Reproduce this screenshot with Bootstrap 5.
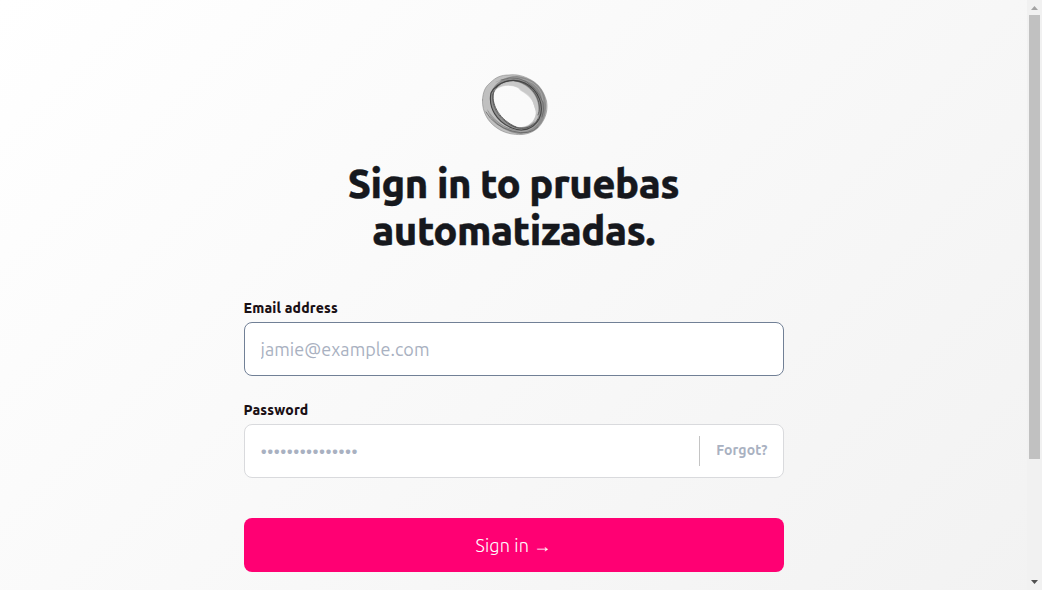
<!DOCTYPE html>
<html lang="en">
<head>
<meta charset="utf-8">
<meta name="viewport" content="width=device-width, initial-scale=1">
<title>Sign in</title>
<link href="https://cdn.jsdelivr.net/npm/bootstrap@5.3.0/dist/css/bootstrap.min.css" rel="stylesheet">
<style>
body{font-family:Ubuntu,"Noto Sans",sans-serif;color:#16161d;height:100vh;overflow:hidden}
.page{background:linear-gradient(135deg,#fff,#f1f1f1) 0 0/100% 743px no-repeat}
.signin{width:540px;padding-top:70px}
.logo{width:70px;height:70px}
.title{font-size:40px;line-height:47px;font-weight:800;letter-spacing:-.53px;-webkit-text-stroke:.35px #16181d;margin:20px 0 44px;color:#16181d}
.field-label{font-size:14px;line-height:20px;font-weight:800;margin-bottom:4px;color:#1a1015;letter-spacing:.17px}
.field{height:54px;border:1px solid #d9dadd;border-radius:8px;background:#fff}
.field.active{border-color:#718096}
.field input{font-size:18px;font-weight:450;letter-spacing:.05px;padding:0 16px;color:#16161d;border:0;background:transparent;box-shadow:none!important}
.field input::placeholder{color:#a9b1c1;opacity:1}
.field .dots::placeholder{font-size:18px;font-weight:400;letter-spacing:0}
.forgot{font-size:14px;font-weight:600;letter-spacing:.12px;color:#a9b1c1;border-left:1px solid #c4c4c4;height:30px;padding:0 15px 2px 16px;text-decoration:none}
.submit{height:54px;margin-top:40px;border-radius:8px;background:#ff0073;color:#fff;font-size:18px;font-weight:300;letter-spacing:.15px;border:0}
.scroll-track{width:15px;background:#f1f1f1}
.thumb{width:11px;height:444px;background:#c1c1c1}
</style>
</head>
<body class="d-flex">
<main class="page flex-grow-1 d-flex justify-content-center">
  <form class="signin">
    <svg class="logo d-block mx-auto" viewBox="0 0 70 70" fill="none">
      <path fill="#c0c0c0" fill-rule="evenodd" d="M3.500 30C4 22 6 17 11 13C17 7 22 5 30 5C38 4 45 6 52 10C60 14 65 22 67.500 31C69 39 67 46 64 51C60 59 52 64 43 64.500C34 65 25 63 18 58C9 52 3 42 3.500 30ZM14 29C15 36 17 42 23 48C29 54 36 58 43 57C52 56 57 49 57 41C55 37 55 32 51 27C47 22 43 22 40 18C35 15 26 14 21 17C16 19 14 23 14 29Z"/>
      <path fill="#777" fill-opacity=".7" fill-rule="evenodd" d="M11 25C14 14 25 6 38 6C56 8 67 20 67 34C68 53 57 63 42 64C27 63 12 53 8 39C15 50 24 57 34 59C47 63 60 55 60 41C60 26 49 13 34 11C22 10 15 17 11 25Z"/>
      <path fill="#666" fill-opacity=".55" d="M11 25C9 39 21 54 35 58C44 62 54 58 56 51C50 58 41 59 33 55C21 50 14 39 14 29C13 23 17 19 22 14C17 16 13 20 11 25Z"/>
      <path fill="#ccc" fill-opacity=".75" d="M18 19C24 12 35 10 43 14C54 19 60 29 59 42L57 44C56 37 54 30 49 26C45 22 42 22 39 18C32 15 24 15 18 19Z"/>
      <g stroke-linecap="round">
        <path stroke="#444" stroke-width="1.100" d="M12 23C18 12 33 7 46 13C60 20 66 37 60 49C54 60 43 62 33 58C18 52 9 38 12 23Z"/>
        <path stroke="#555" stroke-width=".9" d="M15 21C11 32 17 44 26 51C38 62 53 60 59 49M14 24C13 36 21 50 37 57"/>
        <path stroke="#444" stroke-width=".7" d="M17 18C23 10 36 8 46 14C58 21 63 35 59 45"/>
        <path stroke="#888" stroke-width=".6" d="M3.500 30C4 22 6 17 11 13C17 7 22 5 30 5C38 4 45 6 52 10C60 14 65 22 67.500 31C69 39 67 46 64 51C60 59 52 64 43 64.500C34 65 25 63 18 58C9 52 3 42 3.500 30Z"/>
        <path stroke="#aaa" stroke-width=".8" d="M17 12Q31 5 47 10T64 31M9 42Q20 58 35 61T59 53"/>
        <path stroke="#666" stroke-width=".8" d="M7 42Q15 56 33 61T59 57M22 10Q41 3 55 18T63 47"/>
      </g>
    </svg>
    <h1 class="title text-center">Sign in to pruebas<br>automatizadas.</h1>
    <label class="field-label d-block" for="email">Email address</label>
    <div class="field active d-flex align-items-center mb-4">
      <input id="email" class="form-control h-100" type="email" placeholder="jamie@example.com">
    </div>
    <label class="field-label d-block" for="password">Password</label>
    <div class="field d-flex align-items-center">
      <input id="password" class="form-control dots h-100" type="password" placeholder="•••••••••••••••">
      <a class="forgot d-flex align-items-center" href="#">Forgot?</a>
    </div>
    <button class="submit btn w-100" type="button">Sign in →</button>
  </form>
</main>
<aside class="scroll-track d-flex flex-column align-items-center justify-content-between flex-shrink-0">
  <div class="d-flex flex-column align-items-center">
    <svg width="15" height="15"><path d="M4 10h7L7.500 6z" fill="#a3a3a3"/></svg>
    <div class="thumb"></div>
  </div>
  <svg width="15" height="15"><path d="M4 5h7L7.500 9z" fill="#505050"/></svg>
</aside>
</body>
</html>
